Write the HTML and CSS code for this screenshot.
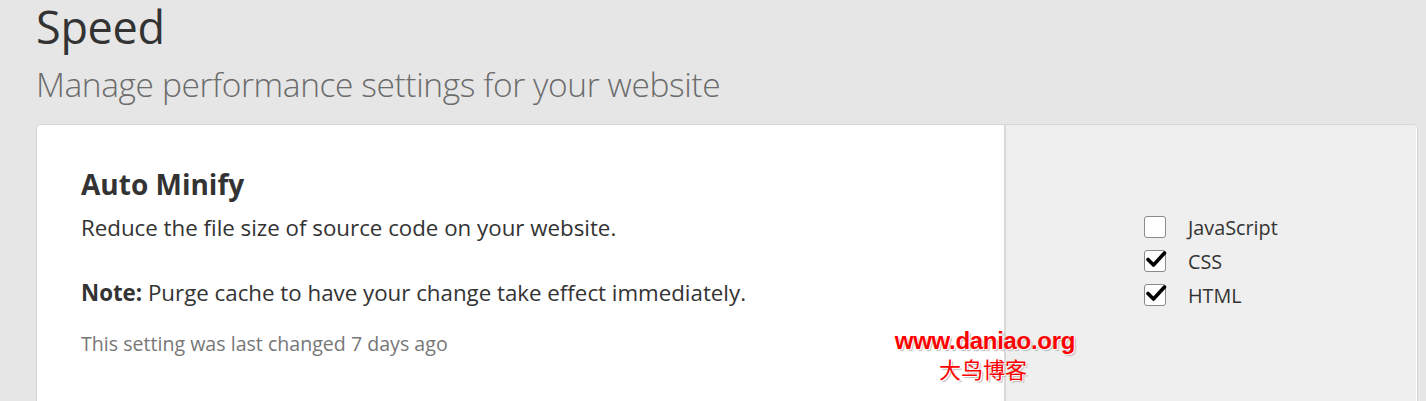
FILE: index.html
```html
<!DOCTYPE html>
<html>
<head>
<meta charset="utf-8">
<link rel="stylesheet" href="styles.css">
</head>
<body>
<div class="page">
  <header class="head">
    <h1 class="title">Speed</h1>
    <p class="subtitle">Manage performance settings for your website</p>
  </header>
  <section class="card">
    <div class="card-main">
      <h2 class="card-title">Auto Minify</h2>
      <p class="card-desc">Reduce the file size of source code on your website.</p>
      <p class="card-note"><strong>Note:</strong> Purge cache to have your change take effect immediately.</p>
      <p class="card-meta">This setting was last changed 7 days ago</p>
    </div>
    <div class="card-side">
      <ul class="checks">
        <li class="check-row"><span class="box"></span><span class="check-label">JavaScript</span></li>
        <li class="check-row"><span class="box checked"><svg viewBox="0 0 22 22" width="22" height="22"><path d="M3 11.5 L8.5 17 L19.5 5" fill="none" stroke="#000" stroke-width="3.6" stroke-linecap="round" stroke-linejoin="round"/></svg></span><span class="check-label">CSS</span></li>
        <li class="check-row"><span class="box checked"><svg viewBox="0 0 22 22" width="22" height="22"><path d="M3 11.5 L8.5 17 L19.5 5" fill="none" stroke="#000" stroke-width="3.6" stroke-linecap="round" stroke-linejoin="round"/></svg></span><span class="check-label">HTML</span></li>
      </ul>
    </div>
    <div class="watermark">
      <span class="wm-url">www.daniao.org</span>
      <span class="wm-cn">大鸟博客</span>
    </div>
  </section>
</div>
</body>
</html>
```
FILE: styles.css
```css
html, body {
  margin: 0;
  padding: 0;
}
body {
  background: #e6e6e6;
  font-family: "Open Sans", "Noto Sans", sans-serif;
  color: #333;
  overflow: hidden;
}
.page {
  padding: 0 8px 0 36px;
}
.title {
  margin: 0;
  font-weight: 400;
  font-size: 45px;
  line-height: 54px;
  color: #333;
  letter-spacing: -0.3px;
}
.subtitle {
  margin: 8px 0 0;
  font-weight: 300;
  font-size: 33.5px;
  line-height: 44px;
  color: #6c6c6c;
  letter-spacing: -0.4px;
}
.card {
  position: relative;
  margin-top: 18px;
  display: flex;
  background: #fff;
  border: 1px solid #d6d6d6;
  border-radius: 5px;
  height: 300px;
  overflow: hidden;
}
.card-main {
  width: 923px;
  padding: 42px 0 0 44px;
  border-right: 2px solid #d9d9d9;
}
.card-title {
  margin: 0;
  font-size: 28px;
  font-weight: 700;
  line-height: 34px;
  color: #333;
}
.card-desc {
  margin: 12px 0 0;
  font-size: 22.3px;
  line-height: 30px;
  color: #333;
}
.card-note {
  margin: 35px 0 0;
  font-size: 22.3px;
  line-height: 30px;
  color: #333;
}
.card-meta {
  margin: 23px 0 0;
  font-size: 19.6px;
  line-height: 26px;
  color: #777;
}
.card-side {
  flex: 1;
  background: #efefef;
  border-right: 1px solid #fff;
  padding: 85px 0 0 138px;
}
.checks {
  list-style: none;
  margin: 0;
  padding: 0;
}
.check-row {
  display: flex;
  align-items: center;
  height: 34px;
}
.box {
  width: 20px;
  height: 20px;
  border: 1px solid #8a8a8a;
  border-radius: 3px;
  background: #fff;
  position: relative;
  flex: none;
}
.box svg {
  position: absolute;
  left: 0;
  top: -3px;
}
.check-label {
  margin-left: 22px;
  font-size: 19.8px;
  color: #333;
}
.watermark {
  position: absolute;
  left: 856px;
  top: 202px;
  display: flex;
  flex-direction: column;
  align-items: center;
  width: 184px;
  color: #f00;
  text-shadow: 1px 1px 0 #fff, 2px 2px 1px #bbb;
}
.wm-url {
  font-family: "Liberation Sans", Arial, sans-serif;
  font-weight: 700;
  font-size: 24px;
  line-height: 28px;
  letter-spacing: -0.3px;
}
.wm-cn {
  font-family: "Noto Sans CJK SC", sans-serif;
  font-size: 22px;
  line-height: 26px;
  margin-left: -4px;
}
```
